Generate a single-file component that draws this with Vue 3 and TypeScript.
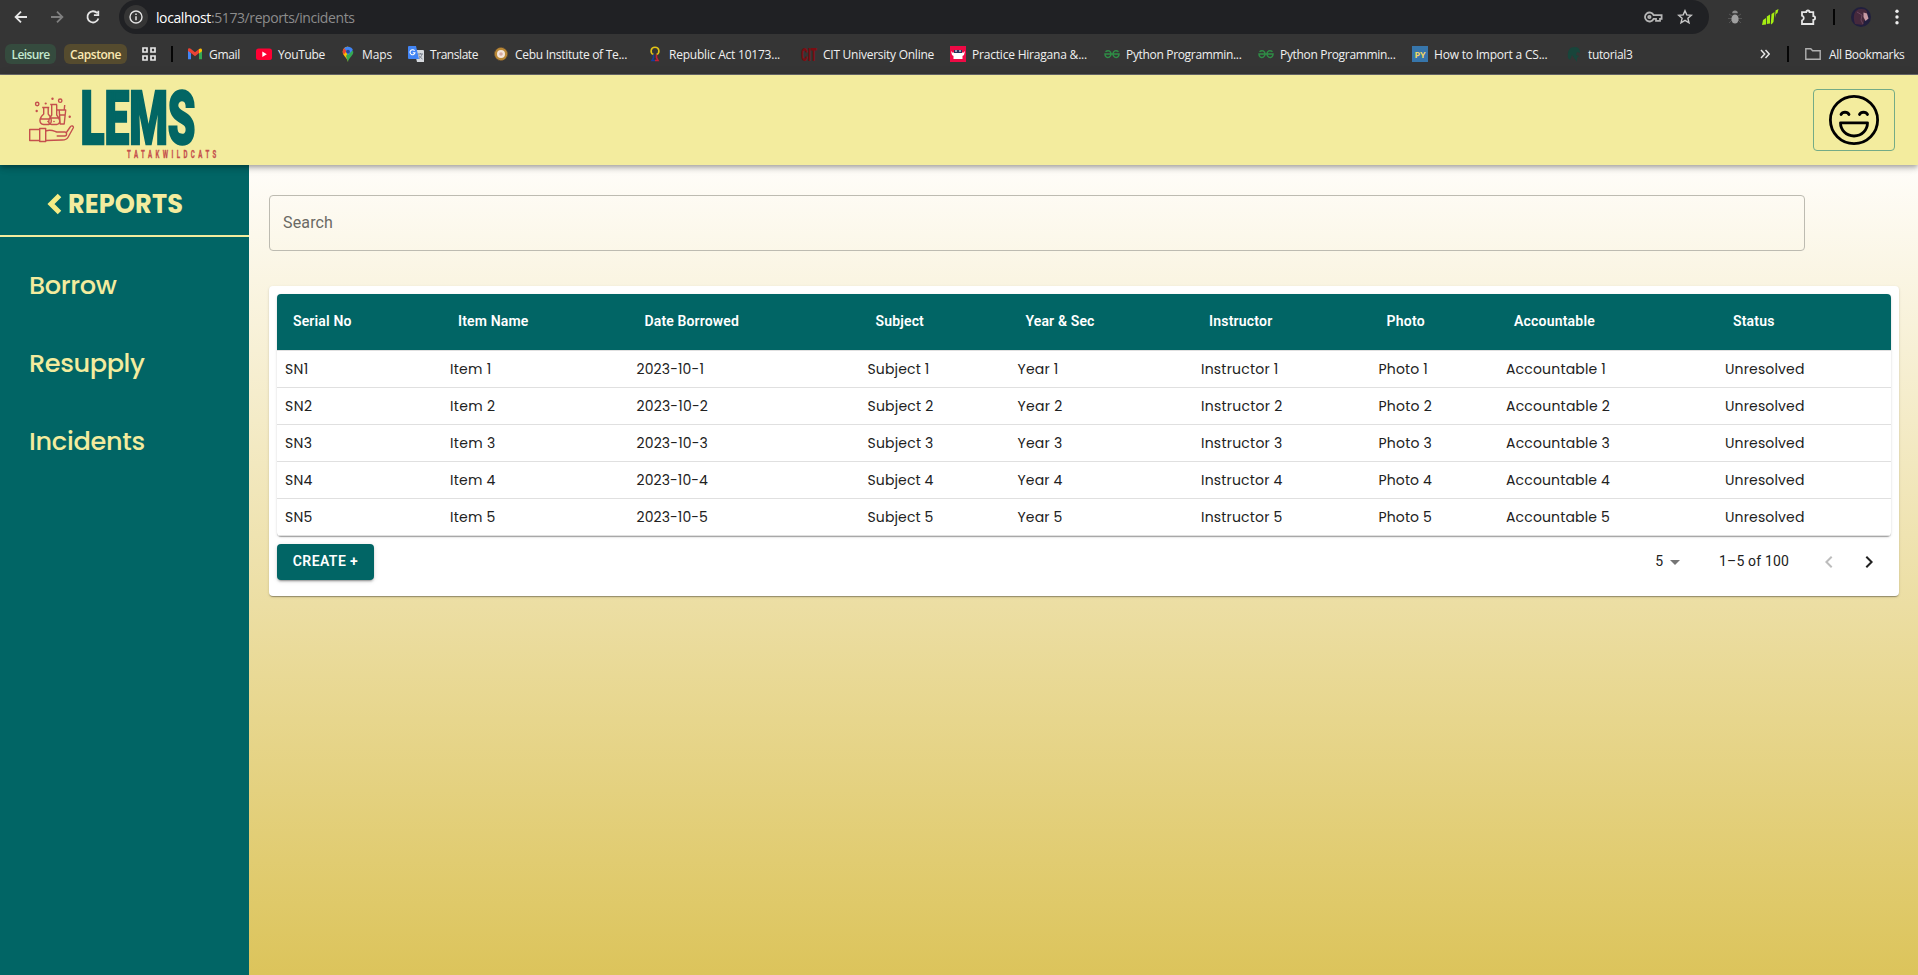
<script setup lang="ts">
import type { Directive } from 'vue'

interface Bookmark {
  icon: string
  label: string
  slot: number
  text: number
}

interface Column {
  key: string
  title: string
  width: number
  titleWidth: number
}

// Tracks a label out (or in) so it occupies a fixed advance width.
const vFit: Directive<HTMLElement, number> = {
  mounted(el, binding) {
    const count = (el.textContent ?? '').length
    const natural = el.getBoundingClientRect().width
    if (count && natural) {
      el.style.letterSpacing = `${(binding.value - natural) / count}px`
    }
  },
}

const bookmarks: Bookmark[] = [
  { icon: 'gmail', label: 'Gmail', slot: 69, text: 31 },
  { icon: 'youtube', label: 'YouTube', slot: 84, text: 47 },
  { icon: 'maps', label: 'Maps', slot: 68, text: 30 },
  { icon: 'translate', label: 'Translate', slot: 85, text: 48 },
  { icon: 'seal', label: 'Cebu Institute of Te...', slot: 154, text: 112 },
  { icon: 'privacy', label: 'Republic Act 10173...', slot: 154, text: 111 },
  { icon: 'cit', label: 'CIT University Online', slot: 149, text: 111 },
  { icon: 'hiragana', label: 'Practice Hiragana &...', slot: 154, text: 115 },
  { icon: 'gfg', label: 'Python Programmin...', slot: 154, text: 115.5 },
  { icon: 'gfg', label: 'Python Programmin...', slot: 154, text: 115.5 },
  { icon: 'py', label: 'How to Import a CS...', slot: 154, text: 113.5 },
  { icon: 'spartan', label: 'tutorial3', slot: 90, text: 44.5 },
]

const columns: Column[] = [
  { key: 'serial', title: 'Serial No', width: 165, titleWidth: 58.5 },
  { key: 'item', title: 'Item Name', width: 186.5, titleWidth: 70.5 },
  { key: 'date', title: 'Date Borrowed', width: 231, titleWidth: 94.5 },
  { key: 'subject', title: 'Subject', width: 150, titleWidth: 48.5 },
  { key: 'year', title: 'Year & Sec', width: 183.5, titleWidth: 69 },
  { key: 'instructor', title: 'Instructor', width: 177.5, titleWidth: 63.5 },
  { key: 'photo', title: 'Photo', width: 127.5, titleWidth: 38.5 },
  { key: 'accountable', title: 'Accountable', width: 219, titleWidth: 81 },
  { key: 'status', title: 'Status', width: 174, titleWidth: 41.5 },
]

const cellWidths: Record<string, number> = {
  serial: 27.5, item: 45.5, date: 71.5, subject: 66, year: 45, instructor: 81.5, photo: 53.5, accountable: 104, status: 79.5,
}

// "1" is a narrow figure, so labels ending in it come out shorter.
const fitFor = (key: string, n: number): number =>
  cellWidths[key] - (n === 1 && key !== 'status' ? 4 : 0)

const rows = [1, 2, 3, 4, 5].map((n) => ({
  n,
  values: {
    serial: `SN${n}`,
    item: `Item ${n}`,
    date: `2023-10-${n}`,
    subject: `Subject ${n}`,
    year: `Year ${n}`,
    instructor: `Instructor ${n}`,
    photo: `Photo ${n}`,
    accountable: `Accountable ${n}`,
    status: 'Unresolved',
  } as Record<string, string>,
}))

const menu = [
  { label: 'Borrow', width: 87.5 },
  { label: 'Resupply', width: 115.5 },
  { label: 'Incidents', width: 116 },
]
</script>

<template>
  <div class="page">
    <div class="chrome">
      <div class="toolbar">
        <div class="nav">
          <svg width="16" height="16" viewBox="0 0 16 16" class="stroke light"><path d="M14 8H3M8 2.6 2.6 8 8 13.4" /></svg>
          <svg width="16" height="16" viewBox="0 0 16 16" class="stroke dim"><path d="M2 8h11M8 2.6 13.4 8 8 13.4" /></svg>
          <svg width="16" height="16" viewBox="0 0 16 16" class="stroke light"><path d="M12.3 4.2A5.6 5.6 0 1 0 13.4 9.5M13.3 1.8v4.4H8.9" /></svg>
        </div>
        <div class="omnibox">
          <span class="info">
            <svg width="14" height="14" viewBox="0 0 14 14"><circle cx="7" cy="7" r="6" fill="none" stroke="#e3e3e3" stroke-width="1.4" /><path d="M7 6.2v4M7 3.6v1.4" stroke="#e3e3e3" stroke-width="1.5" /></svg>
          </span>
          <span v-fit="198.5" class="url"><b>localhost</b>:5173/reports/incidents</span>
          <span class="grow" />
          <svg width="19" height="12" viewBox="0 0 19 12" class="stroke key"><path d="M9.6 4.2A4.5 4.5 0 1 0 9.6 7.8H12v2h4v-2h1.6V4.2Z" /><circle cx="5.4" cy="6" r="1.2" /></svg>
          <svg width="16" height="16" viewBox="0 0 16 16" class="stroke star"><path d="m8 1.7 1.8 4.2 4.6.4-3.5 3 1.1 4.5L8 11.4l-4 2.4 1.1-4.5-3.5-3 4.6-.4Z" /></svg>
        </div>
        <div class="extensions">
          <svg width="14" height="16" viewBox="0 0 14 16"><path d="M1 5l3 2M0 9.5h4M1 14l3-3M13 5l-3 2M14 9.5h-4M13 14l-3-3" stroke="#555" /><ellipse cx="7" cy="10" rx="3.6" ry="4.6" fill="#a0a0a0" /><path d="M4.2 4.3a2.8 2.8 0 0 1 5.6 0Z" fill="#8b8b8b" /></svg>
          <svg width="17" height="17" viewBox="0 0 17 17"><path d="M0 16 1 11l3-2v6.500ZM4.800 15V7.500L8 5.500v9ZM8.800 14.500 9.500 5 12.500 3l-1 10-2 2.500ZM13 9l.5-7.500 3-1.500-1 4-1.500 1Z" fill="#a5ee12" /></svg>
          <svg width="17" height="17" viewBox="0 0 17 17" class="stroke ext"><path d="M2 3.200h4.200a1.700 1.700 0 0 1 3.400 0h3.700v4a1.800 1.800 0 0 1 0 3.600V15H2v-3.500a2.500 2.500 0 0 0 0-4.800Z" /></svg>
          <i class="bar" />
          <svg width="20" height="20" viewBox="0 0 20 20"><circle cx="10" cy="10" r="10" fill="#211f3e" /><path d="M4 17C1 8 4 1 11 2c6 0 6 5 4 7l-3 9Z" fill="#46293c" /><path d="M12.500 5.500l3.500 1 1.500 5-3 2.500-2-4Z" fill="#c89aa4" /><path d="M6 5l5 3-1 5 2 4" fill="none" stroke="#6b465f" /></svg>
          <svg width="4" height="16" viewBox="0 0 4 16" fill="#eee"><circle cx="2" cy="2.2" r="1.7" /><circle cx="2" cy="8" r="1.7" /><circle cx="2" cy="13.8" r="1.7" /></svg>
        </div>
      </div>
      <div class="bookmarks">
        <span class="pill green"><span v-fit="38">Leisure</span></span>
        <span class="pill brown"><span v-fit="51">Capstone</span></span>
        <svg class="apps" width="14" height="14" viewBox="0 0 14 14" fill="none" stroke="#e6e6e6" stroke-width="1.7"><path d="M1 1h4v4H1ZM9 1h4v4H9ZM1 9h4v4H1ZM9 9h4v4H9Z" /></svg>
        <i class="bar" />
        <div class="links">
          <div v-for="(b, i) in bookmarks" :key="i" class="bookmark" :style="{ width: b.slot + 'px' }">
            <svg width="16" height="16" viewBox="0 0 16 16">
              <g v-if="b.icon === 'gmail'">
                <path d="M1 4v9.2h3V7Z" fill="#4285f4" /><path d="M15 4v9.2h-3V7Z" fill="#34a853" /><path d="M1 3.5C1 2 3 2 4 3l4 3.2L12 3v4L8 10.200 4 7 1 5Z" fill="#ea4335" /><path d="M12 3c1.500-1 3-.5 3 1v1.200L12 7.400Z" fill="#fbbc04" />
              </g>
              <g v-else-if="b.icon === 'youtube'"><rect y="2.500" width="16" height="11.500" rx="2.500" fill="#ff0033" /><path d="m6.300 5.600 4.500 2.700-4.500 2.700Z" fill="#fff" /></g>
              <g v-else-if="b.icon === 'maps'">
                <path d="M8 16C7 11 2.700 10 2.700 5.700A5.300 5.300 0 0 1 8 .4Z" fill="#fbbc04" /><path d="M8 16c1-5 5.300-6 5.300-10.300L11 3 6 10l1 3Z" fill="#34a853" /><path d="M4 2.500A5.300 5.300 0 0 1 12.900 4L8 9Z" fill="#4285f4" /><path d="M4 2.300 6.600 5 3.800 8.500C2.300 6.500 2.400 4 4 2.300Z" fill="#ea4335" /><circle cx="8" cy="5.700" r="1.900" fill="#234b9a" />
              </g>
              <g v-else-if="b.icon === 'translate'">
                <path d="M6 4h9a1 1 0 0 1 1 1v11H9Z" fill="#d6d9dd" /><path d="M0 1a1 1 0 0 1 1-1h7l3 13H1a1 1 0 0 1-1-1Z" fill="#4285f4" /><path d="M6.600 4.800A2.500 2.500 0 1 0 7 6.700H4.800" fill="none" stroke="#fff" stroke-width="1.100" /><path d="M10 8h5M12.500 7v1M14 8c-.5 2-1.500 3.500-3 4.500M11 9.500c1 1.500 2 2.500 3.500 3.500" fill="none" stroke="#777f8b" />
              </g>
              <g v-else-if="b.icon === 'seal'"><circle cx="8" cy="8" r="6.500" fill="#b88735" stroke="#725331" stroke-dasharray="1 1" /><circle cx="8" cy="8" r="4" fill="#f4e5da" /><circle cx="8" cy="8" r="1.800" fill="#d6a9a0" /></g>
              <g v-else-if="b.icon === 'privacy'" fill="none" stroke-width="1.600"><path d="M6.500 8.500C2.800 7 3.500 1.200 8 1.200s5.200 5.800 1.500 7.300" stroke="#e4c416" /><path d="M6.500 8.500v3L5 14.500h3" stroke="#173d9b" /><path d="M9.500 8.500v3l1.500 3H8" stroke="#c51f35" /></g>
              <text v-else-if="b.icon === 'cit'" x="0" y="14.500" textLength="16" lengthAdjust="spacingAndGlyphs" class="cit">CIT</text>
              <g v-else-if="b.icon === 'hiragana'"><rect width="16" height="16" fill="#ee0a45" /><path d="M3 7 1 5l1 4 1.500 1v3h9v-3L14 9l1-4-2 2-2-2H5Z" fill="#fff" /><path d="M4 4h8v3H4Z" fill="#27335e" /><path d="M5 4.500h2v1H5ZM9 4.500h2v1H9Z" fill="#fff" /></g>
              <g v-else-if="b.icon === 'gfg'" fill="none" stroke="#2f8d46" stroke-width="1.500"><path d="M1.500 5.800C4 3.500 7 5 7 8s-3 4.500-5 2.700C1 10 1 9 1 8h14c0 1 0 2-1 2.700C12 12.500 9 11 9 8s3-4.500 5.500-2.200" /></g>
              <g v-else-if="b.icon === 'py'"><rect width="16" height="16" fill="#3776ab" /><text x="2.500" y="11.500" textLength="11" class="py">PY</text></g>
              <path v-else d="M2 12C1 4 4 1 9 1c4 0 5 3 5 6l-3-1-1 3 3 1-2 2v4L8 12 6 9l-2 5Z" fill="#18453b" />
            </svg>
            <span v-fit="b.text">{{ b.label }}</span>
          </div>
        </div>
        <svg class="more" width="10" height="10" viewBox="0 0 10 10" fill="none" stroke="#e6e6e6" stroke-width="1.500"><path d="m1 1 3.700 4L1 9M5.500 1l3.700 4-3.700 4" /></svg>
        <i class="bar" />
        <svg class="folder" width="16" height="14" viewBox="0 0 16 14" fill="none" stroke="#b0b0b0" stroke-width="1.400"><path d="M.8 1.700h5l1.800 2h7.600v8.600H.8Z" /></svg>
        <span v-fit="75.500">All Bookmarks</span>
      </div>
    </div>

    <header class="appbar">
      <svg class="logo" width="220" height="89" viewBox="0 0 220 89">
        <g fill="none" stroke="#c5504d" stroke-width="1.400" stroke-linejoin="round" transform="translate(-.8 0)">
          <path d="M30.500 54.500h10v11h-10ZM40.500 53.500h6v13h-6ZM46.500 56c5-2 7-.5 11 1h8c2.500 0 2.500 4 0 4h-8M66.500 58.500l4.500-6.500c1-2 4-1 3 1l-5 9c-1 2-3 3-6 3l-16 .5" />
          <path d="M43 32.500h7M44.500 33v6c-5 4-5 10 0 10.500h5c4-1 3-7-.5-10.500v-6M41.500 44h9M51 29.500h7M52.500 30v10c-4 5-4 9 0 9.500h5c5-1 3-6 0-9.500V30M50.500 43h9M58 35h9M60 35l1 14h4l1.500-14M61 40h5M65 35l.5-5" />
          <circle cx="38" cy="29" r="1.700" /><circle cx="61" cy="25.700" r="1.700" />
        </g>
        <g fill="#c5504d"><circle cx="52.500" cy="23.700" r="1.200" /><circle cx="45.700" cy="28.500" r="1.100" /><circle cx="36.700" cy="36" r="1.200" /><circle cx="69.700" cy="41.700" r="1.200" /><circle cx="48" cy="46.500" r=".8" /><circle cx="54" cy="46.500" r=".8" /></g>
        <text class="wordmark" x="80.500" y="68.500" textLength="115" lengthAdjust="spacingAndGlyphs">LEMS</text>
        <text class="tagline" transform="translate(127 83) scale(.58 1)" textLength="154">TATAKWILDCATS</text>
      </svg>
      <button class="avatar" aria-label="Profile">
        <svg width="52" height="52" viewBox="0 0 52 52" fill="none" stroke="#000" stroke-width="2.800" stroke-linecap="round" stroke-linejoin="round">
          <circle cx="26" cy="26" r="23.600" /><path d="M13 20.500c1.500-3 6.500-3 8 0M31.500 20.500c1.500-3 6.500-3 8 0M12.500 28.800h27c0 7-5.500 13.200-13.500 13.200S12.500 36 12.500 28.800Z" />
        </svg>
      </button>
    </header>

    <div class="body">
      <aside class="sidebar">
        <div class="heading">
          <svg width="15" height="22" viewBox="0 0 15 22"><path d="M12.500 2.500 4 11l8.500 8.500" fill="none" stroke="#f4ec84" stroke-width="5" /></svg>
          <span v-fit="115">REPORTS</span>
        </div>
        <nav class="menu">
          <a v-for="m in menu" :key="m.label"><span v-fit="m.width">{{ m.label }}</span></a>
        </nav>
      </aside>

      <main class="content">
        <div class="search">Search</div>
        <section class="card">
          <table>
            <colgroup><col v-for="c in columns" :key="c.key" :style="{ width: c.width + 'px' }"></colgroup>
            <thead>
              <tr><th v-for="c in columns" :key="c.key"><span v-fit="c.titleWidth">{{ c.title }}</span></th></tr>
            </thead>
            <tbody>
              <tr v-for="r in rows" :key="r.n">
                <td v-for="c in columns" :key="c.key"><span v-fit="fitFor(c.key, r.n)">{{ r.values[c.key] }}</span></td>
              </tr>
            </tbody>
          </table>
          <div class="footer">
            <button class="create"><span v-fit="65.500">CREATE +</span></button>
            <div class="pager">
              <span class="size">5</span>
              <svg class="caret" width="10" height="5" viewBox="0 0 10 5"><path d="M0 0h10L5 5Z" fill="#757575" /></svg>
              <span v-fit="70" class="range">1–5 of 100</span>
              <svg class="prev" width="8" height="12" viewBox="0 0 8 12"><path d="M6.700.7 1.400 6l5.300 5.300" fill="none" stroke="#bdbdbd" stroke-width="2" /></svg>
              <svg class="next" width="8" height="12" viewBox="0 0 8 12"><path d="M1.300.7 6.600 6l-5.300 5.300" fill="none" stroke="#212121" stroke-width="2" /></svg>
            </div>
          </div>
        </section>
      </main>
    </div>
  </div>
</template>

<style>
body {
  margin: 0;
  overflow: hidden;
}
</style>

<style scoped>
* {
  box-sizing: border-box;
}

.page {
  display: flex;
  flex-direction: column;
  height: 100vh;
  overflow: hidden;
  font-family: Poppins, Inter, "Liberation Sans", sans-serif;
}

svg {
  display: block;
  flex: none;
}

span {
  white-space: nowrap;
}

/* browser frame */
.chrome {
  flex: none;
  height: 75px;
  background: #353535;
  border-bottom: 1px solid #6b6b6b;
  color: #f0f0f0;
  font: 12px "Segoe UI", "Open Sans", "Noto Sans", sans-serif;
}

.toolbar {
  display: flex;
  height: 34px;
  align-items: center;
}

.nav {
  display: flex;
  gap: 20px;
  width: 119px;
  padding-left: 13px;
}

.stroke {
  fill: none;
  stroke-width: 1.800;
}

.light {
  stroke: #e6e6e6;
}

.dim {
  stroke: #7f7f7f;
}

.omnibox {
  display: flex;
  align-items: center;
  width: 1590px;
  height: 34px;
  padding: 0 16px 0 5px;
  background: #202124;
  border-radius: 17px;
}

.info {
  display: grid;
  place-items: center;
  width: 24px;
  height: 24px;
  border-radius: 50%;
  background: #353535;
}

.url {
  margin-left: 8px;
  font-size: 14px;
  color: #8c8c8c;
}

.url b {
  font-weight: 400;
  color: #fff;
}

.grow {
  flex: 1;
}

.key {
  stroke: #b5b5b5;
}

.star {
  margin-left: 14px;
  stroke: #c7c7c7;
  stroke-width: 1.400;
}

.extensions {
  display: flex;
  flex: 1;
  align-items: center;
  padding-left: 19px;
}

.extensions svg:nth-of-type(2) {
  margin-left: 20px;
}

.extensions .ext {
  margin: 0 16px 0 21px;
  stroke: #e6e6e6;
}

.extensions .bar + svg {
  margin: 0 24px 0 16px;
}

.bar {
  width: 2px;
  height: 16px;
  background: #050505;
}

.bookmarks {
  display: flex;
  align-items: center;
  height: 40px;
  padding-left: 5px;
}

.pill {
  display: grid;
  place-content: center;
  height: 20px;
  border-radius: 6px;
  font-weight: 600;
}

.green {
  width: 51px;
  background: #354b3e;
  color: #c4e8ce;
}

.brown {
  width: 63px;
  margin-left: 8px;
  background: #554b2e;
  color: #fbe9b4;
}

.apps {
  margin: 0 15px;
}

.links {
  display: flex;
  flex: none;
  width: 1573px;
  margin-left: 14px;
}

.bookmark {
  display: flex;
  flex: none;
  align-items: center;
  gap: 6px;
}

.bookmark svg {
  overflow: visible;
}

.cit {
  font: 900 18px Roboto, sans-serif;
  fill: #7b0d12;
}

.py {
  font: 700 9px "Open Sans", sans-serif;
  fill: #f1d865;
}

.more {
  margin-right: 17px;
}

.folder {
  margin: 0 8px 0 16px;
}

/* application */
.appbar {
  position: relative;
  z-index: 2;
  display: flex;
  flex: none;
  align-items: flex-start;
  justify-content: space-between;
  height: 90px;
  padding-right: 23px;
  background: #f3ec9e;
  box-shadow: 0 2px 4px -1px rgba(0, 0, 0, 0.2), 0 4px 5px rgba(0, 0, 0, 0.14), 0 1px 10px rgba(0, 0, 0, 0.12);
}

.logo {
  overflow: visible;
}

.wordmark {
  font: 900 74px Roboto, sans-serif;
  fill: #026664;
  stroke: #026664;
  stroke-width: 2.400;
}

.tagline {
  font: 700 10.500px Roboto, sans-serif;
  fill: #c5504d;
  stroke: #c5504d;
  stroke-width: 0.300;
}

.avatar {
  display: grid;
  place-content: center;
  width: 82px;
  height: 62px;
  margin-top: 14px;
  padding: 0;
  background: none;
  border: 1px solid #74ab86;
  border-radius: 4px;
}

.body {
  display: flex;
  flex: 1;
}

.sidebar {
  flex: none;
  width: 249px;
  background: #016565;
  color: #f3ec9e;
}

.heading {
  display: flex;
  align-items: center;
  gap: 6px;
  height: 72px;
  padding: 9px 0 0 47px;
  border-bottom: 2px solid #f3ec9e;
  font-size: 25.600px;
  font-weight: 700;
}

.heading svg {
  margin-top: -2px;
}

.menu a {
  display: block;
  height: 78px;
  padding: 0 29px;
  font-size: 25.600px;
  font-weight: 500;
  line-height: 97px;
}

.menu a span,
th span,
td span {
  display: inline-block;
}

.content {
  flex: 1;
  padding: 30px 19px 0 20px;
  background: linear-gradient(#fffdf9, #dcc45b);
}

.search {
  width: 1536px;
  height: 56px;
  padding: 0 13px;
  border: 1px solid #bdbbb1;
  border-radius: 4px;
  font: 16px/54px Roboto, sans-serif;
  letter-spacing: 0.150px;
  color: #6a6964;
}

.card {
  height: 310px;
  margin-top: 35px;
  padding: 8px;
  background: #fff;
  border-radius: 4px;
  box-shadow: 0 2px 1px -1px rgba(0, 0, 0, 0.2), 0 1px 1px rgba(0, 0, 0, 0.14), 0 1px 3px rgba(0, 0, 0, 0.12);
}

table {
  width: 1614px;
  table-layout: fixed;
  border-collapse: separate;
  border-spacing: 0;
  border-radius: 4px;
  box-shadow: 0 2px 1px -1px rgba(0, 0, 0, 0.2), 0 1px 1px rgba(0, 0, 0, 0.14), 0 1px 3px rgba(0, 0, 0, 0.12);
}

th,
td {
  text-align: left;
  border-bottom: 1px solid #e0e0e0;
}

th {
  height: 57px;
  padding: 0 0 2px 16px;
  background: #016565;
  background-clip: padding-box;
  color: #fff;
  font: 600 14px/20px Roboto, sans-serif;
}

th:first-child {
  border-top-left-radius: 4px;
}

th:last-child {
  border-top-right-radius: 4px;
}

td {
  height: 37px;
  padding: 0 0 0 8px;
  font-size: 14px;
  line-height: 20px;
  color: #212121;
}

.footer {
  display: flex;
  justify-content: space-between;
  width: 1614px;
  height: 36px;
  margin-top: 8px;
  font: 14px Roboto, sans-serif;
}

.create {
  width: 97px;
  height: 36px;
  padding: 0 0 2px;
  border: 0;
  border-radius: 4px;
  background: #016565;
  box-shadow: 0 3px 1px -2px rgba(0, 0, 0, 0.2), 0 2px 2px rgba(0, 0, 0, 0.14), 0 1px 5px rgba(0, 0, 0, 0.12);
  color: #fff;
  font: 600 14px Roboto, sans-serif;
}

.pager {
  display: flex;
  align-items: center;
  padding: 0 18px 2px 0;
  color: #212121;
}

.caret {
  margin: 3px 39px 0 7px;
}

.prev {
  margin: 2px 32px 0 36px;
}

.next {
  margin-top: 2px;
}
</style>
